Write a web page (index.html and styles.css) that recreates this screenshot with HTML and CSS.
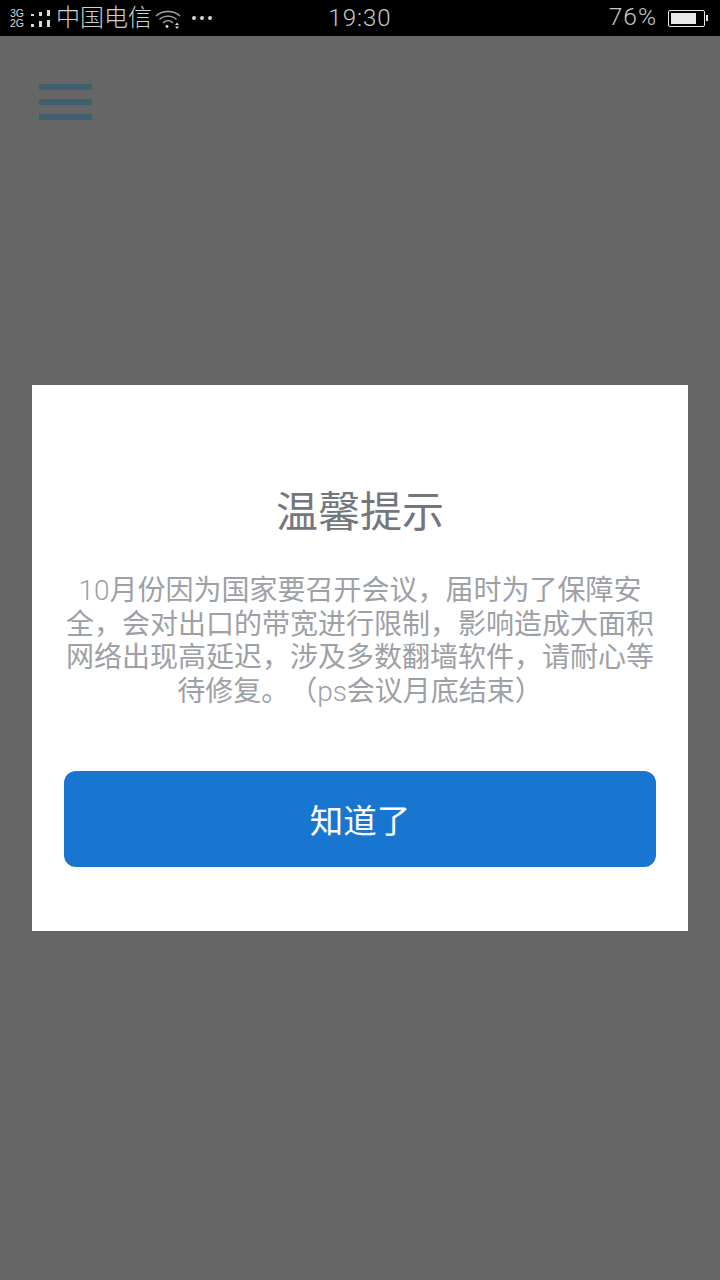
FILE: index.html
```html
<!DOCTYPE html>
<html lang="zh">
<head>
<meta charset="utf-8">
<title>温馨提示</title>
<link rel="stylesheet" href="styles.css">
</head>
<body>
<div class="status">
  <div class="status-left">
    <div class="net"><span>3G</span><span>2G</span></div>
    <svg class="bars" width="20" height="18" viewBox="0 0 20 18"><g fill="#d8d8d8"><rect x="0" y="4" width="3" height="2"/><rect x="0" y="14" width="3" height="3"/><rect x="8" y="2" width="3" height="4"/><rect x="8" y="11" width="3" height="6"/><rect x="16" y="0" width="3" height="6"/><rect x="16" y="10" width="3" height="7"/></g></svg>
    <span class="carrier">中国电信</span>
    <svg class="wifi" width="26" height="20" viewBox="0 0 26 20" fill="none" stroke="#a8a8a8" stroke-width="1.4"><path d="M1 7 C7 1 19 1 25 7"/><path d="M4.5 10.5 C9 6 17 6 21.5 10.5"/><path d="M8 14 C11 11 15 11 18 14"/><circle cx="12" cy="17.5" r="1.4" fill="#d8d8d8" stroke="none"/><path d="M20 16 l2-2.5 2 2.500z M20 17.500 l2 2.500 2-2.500z" fill="#d8d8d8" stroke="none"/></svg>
    <div class="dots"><i></i><i></i><i></i></div>
  </div>
  <div class="clock">19:30</div>
  <div class="status-right">
    <span class="pct">76%</span>
    <div class="battery"><div class="level"></div></div>
    <div class="nub"></div>
  </div>
</div>
<main class="screen">
  <div class="menu"><i></i><i></i><i></i></div>
  <section class="dialog">
    <h1 class="title">温馨提示</h1>
    <p class="message">10月份因为国家要召开会议，届时为了保障安全，会对出口的带宽进行限制，影响造成大面积网络出现高延迟，涉及多数翻墙软件，请耐心等待修复。（ps会议月底结束）</p>
    <div class="action">知道了</div>
  </section>
</main>
</body>
</html>
```
FILE: styles.css
```css
* { box-sizing: border-box; }
html, body { margin: 0; padding: 0; }
body {
  width: 720px;
  height: 1280px;
  overflow: hidden;
  background: #666666;
  font-family: "Roboto", "Noto Sans CJK SC", sans-serif;
  text-spacing-trim: space-all;
}
.status {
  height: 36px;
  background: #000;
  color: #d8d8d8;
  display: grid;
  grid-template-columns: 1fr auto 1fr;
  align-items: center;
}
.status-left { display: flex; align-items: center; padding-left: 10px; }
.net {
  display: flex;
  flex-direction: column;
  font: 10.5px/10px "Liberation Sans", sans-serif;
  width: 21px;
}
.bars { margin-top: 2px; }
.carrier { font-size: 24px; line-height: 36px; margin-left: 5px; font-weight: 300; color: #cfcfcf; }
.wifi { margin-left: 3px; margin-top: 1px; }
.dots { display: flex; gap: 4px; margin-left: 11px; }
.dots i { width: 4px; height: 4px; border-radius: 50%; background: #d8d8d8; }
.clock { font-size: 24px; font-weight: 300; color: #c8c8c8; letter-spacing: 1px; }
.status-right { display: flex; align-items: center; justify-content: flex-end; padding-right: 12px; }
.pct { font-size: 24.5px; line-height: 34px; padding-bottom: 2px; font-weight: 300; color: #c8c8c8; margin-right: 11px; letter-spacing: 1px; }
.battery { width: 37px; height: 17px; border: 1.5px solid #e8e8e8; border-radius: 2px; padding: 2px; }
.level { width: 25px; height: 100%; background: #e8e8e8; }
.nub { width: 2px; height: 6px; background: #e8e8e8; margin-left: 1px; }
.screen { height: 1244px; display: flex; flex-direction: column; padding: 48px 32px 0; }
.menu { width: 53px; margin-left: 7px; display: flex; flex-direction: column; gap: 9px; }
.menu i { display: block; height: 6px; background: #40606f; }
.dialog {
  margin-top: 265px;
  width: 656px;
  height: 546px;
  background: #fff;
  padding: 104px 32px 0;
  display: flex;
  flex-direction: column;
  align-items: center;
}
.title { margin: 0; font-size: 42px; line-height: 48px; font-weight: 400; color: #73777d; }
.message {
  margin: 37px 0 0;
  font-family: "Roboto Light", "Roboto", "Noto Sans CJK SC", sans-serif;
  font-size: 28px;
  line-height: 33.5px;
  font-weight: 400;
  color: #9da0a5;
  text-align: center;
  width: 592px;
}
.action {
  margin-top: 63px;
  width: 592px;
  height: 96px;
  padding-bottom: 2px;
  background: #1976d0;
  border-radius: 12px;
  color: #fff;
  font-size: 33.5px;
  font-weight: 400;
  display: flex;
  align-items: center;
  justify-content: center;
}
```
